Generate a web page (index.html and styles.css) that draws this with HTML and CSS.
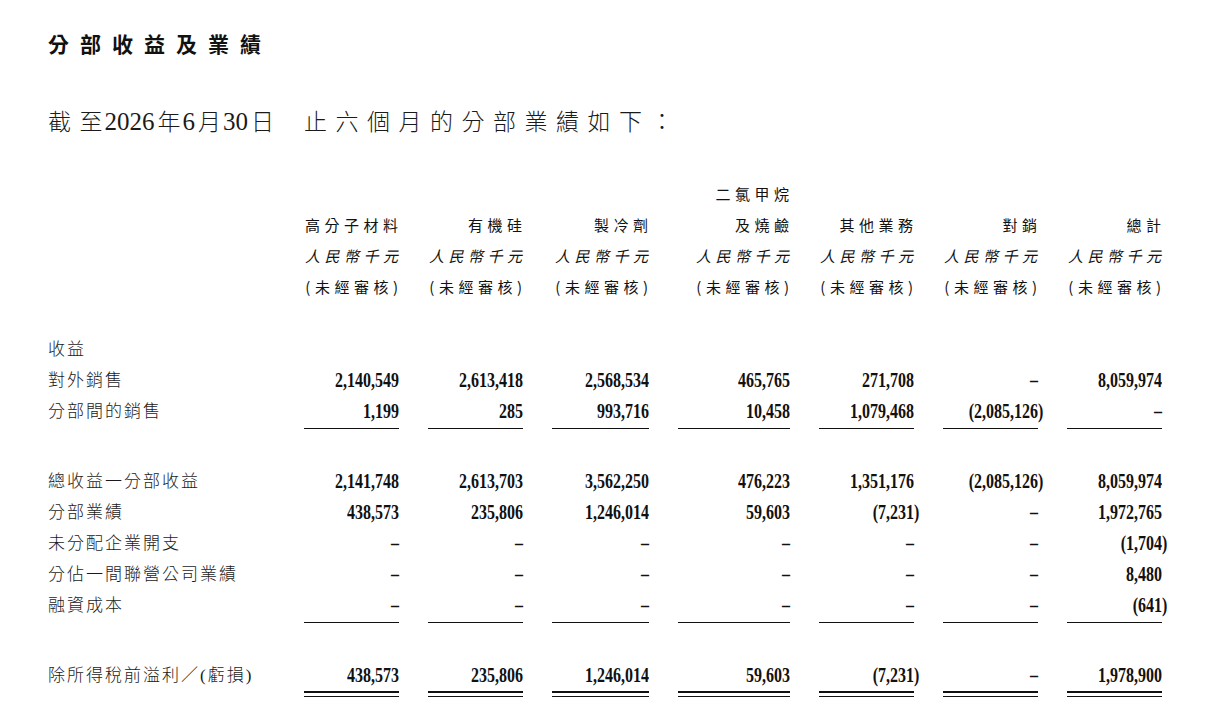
FILE: index.html
```html
<!DOCTYPE html>
<html lang="zh-Hant">
<head>
<meta charset="utf-8">
<title>分部收益及業績</title>
<link rel="stylesheet" href="styles.css">
</head>
<body>
<div class="page">
  <h1 class="title">分部收益及業績</h1>
  <p class="lead"><span class="sp">截</span>至<span class="d">2026</span>年<span class="d">6</span>月<span class="d">30</span>日<span class="gap"></span><span class="sp">止六個月的分部業績如下</span>：</p>

  <div class="head">
    <div class="row">
      <div></div><div></div><div></div><div></div>
      <div class="hc"><span class="ht">二氯甲烷</span></div>
      <div></div><div></div><div></div>
    </div>
    <div class="row">
      <div></div>
      <div class="hc"><span class="ht">高分子材料</span></div>
      <div class="hc"><span class="ht">有機硅</span></div>
      <div class="hc"><span class="ht">製冷劑</span></div>
      <div class="hc"><span class="ht">及燒鹼</span></div>
      <div class="hc"><span class="ht">其他業務</span></div>
      <div class="hc"><span class="ht">對銷</span></div>
      <div class="hc"><span class="ht">總計</span></div>
    </div>
    <div class="row it">
      <div></div>
      <div class="hc"><span class="ht">人民幣千元</span></div>
      <div class="hc"><span class="ht">人民幣千元</span></div>
      <div class="hc"><span class="ht">人民幣千元</span></div>
      <div class="hc"><span class="ht">人民幣千元</span></div>
      <div class="hc"><span class="ht">人民幣千元</span></div>
      <div class="hc"><span class="ht">人民幣千元</span></div>
      <div class="hc"><span class="ht">人民幣千元</span></div>
    </div>
    <div class="row">
      <div></div>
      <div class="hc"><span class="ht">(未經審核)</span></div>
      <div class="hc"><span class="ht">(未經審核)</span></div>
      <div class="hc"><span class="ht">(未經審核)</span></div>
      <div class="hc"><span class="ht">(未經審核)</span></div>
      <div class="hc"><span class="ht">(未經審核)</span></div>
      <div class="hc"><span class="ht">(未經審核)</span></div>
      <div class="hc"><span class="ht">(未經審核)</span></div>
    </div>
  </div>

  <div class="block first">
    <div class="row">
      <div class="lbl">收益</div>
      <div></div><div></div><div></div><div></div><div></div><div></div><div></div>
    </div>
    <div class="row">
      <div class="lbl">對外銷售</div>
      <div class="v"><span class="n">2,140,549</span></div>
      <div class="v"><span class="n">2,613,418</span></div>
      <div class="v"><span class="n">2,568,534</span></div>
      <div class="v"><span class="n">465,765</span></div>
      <div class="v"><span class="n">271,708</span></div>
      <div class="v"><span class="n">–</span></div>
      <div class="v"><span class="n">8,059,974</span></div>
    </div>
    <div class="row ul">
      <div class="lbl">分部間的銷售</div>
      <div class="v"><span class="n">1,199</span></div>
      <div class="v"><span class="n">285</span></div>
      <div class="v"><span class="n">993,716</span></div>
      <div class="v"><span class="n">10,458</span></div>
      <div class="v"><span class="n">1,079,468</span></div>
      <div class="v"><span class="n neg">(2,085,126)</span></div>
      <div class="v"><span class="n">–</span></div>
    </div>
  </div>

  <div class="block">
    <div class="row">
      <div class="lbl">總收益一分部收益</div>
      <div class="v"><span class="n">2,141,748</span></div>
      <div class="v"><span class="n">2,613,703</span></div>
      <div class="v"><span class="n">3,562,250</span></div>
      <div class="v"><span class="n">476,223</span></div>
      <div class="v"><span class="n">1,351,176</span></div>
      <div class="v"><span class="n neg">(2,085,126)</span></div>
      <div class="v"><span class="n">8,059,974</span></div>
    </div>
    <div class="row">
      <div class="lbl">分部業績</div>
      <div class="v"><span class="n">438,573</span></div>
      <div class="v"><span class="n">235,806</span></div>
      <div class="v"><span class="n">1,246,014</span></div>
      <div class="v"><span class="n">59,603</span></div>
      <div class="v"><span class="n neg">(7,231)</span></div>
      <div class="v"><span class="n">–</span></div>
      <div class="v"><span class="n">1,972,765</span></div>
    </div>
    <div class="row">
      <div class="lbl">未分配企業開支</div>
      <div class="v"><span class="n">–</span></div>
      <div class="v"><span class="n">–</span></div>
      <div class="v"><span class="n">–</span></div>
      <div class="v"><span class="n">–</span></div>
      <div class="v"><span class="n">–</span></div>
      <div class="v"><span class="n">–</span></div>
      <div class="v"><span class="n neg">(1,704)</span></div>
    </div>
    <div class="row">
      <div class="lbl">分佔一間聯營公司業績</div>
      <div class="v"><span class="n">–</span></div>
      <div class="v"><span class="n">–</span></div>
      <div class="v"><span class="n">–</span></div>
      <div class="v"><span class="n">–</span></div>
      <div class="v"><span class="n">–</span></div>
      <div class="v"><span class="n">–</span></div>
      <div class="v"><span class="n">8,480</span></div>
    </div>
    <div class="row ul">
      <div class="lbl">融資成本</div>
      <div class="v"><span class="n">–</span></div>
      <div class="v"><span class="n">–</span></div>
      <div class="v"><span class="n">–</span></div>
      <div class="v"><span class="n">–</span></div>
      <div class="v"><span class="n">–</span></div>
      <div class="v"><span class="n">–</span></div>
      <div class="v"><span class="n neg">(641)</span></div>
    </div>
  </div>

  <div class="block">
    <div class="row dbl">
      <div class="lbl">除所得稅前溢利／(虧損)</div>
      <div class="v"><span class="n">438,573</span></div>
      <div class="v"><span class="n">235,806</span></div>
      <div class="v"><span class="n">1,246,014</span></div>
      <div class="v"><span class="n">59,603</span></div>
      <div class="v"><span class="n neg">(7,231)</span></div>
      <div class="v"><span class="n">–</span></div>
      <div class="v"><span class="n">1,978,900</span></div>
    </div>
  </div>
</div>
</body>
</html>
```

FILE: styles.css
```css
html, body {
  margin: 0;
  padding: 0;
  background: #ffffff;
}

body {
  color: #161616;
  font-family: "Liberation Serif", "Noto Sans CJK TC", serif;
}

.page {
  padding: 28px 0 20px 48px;
  width: 1180px;
  box-sizing: border-box;
}

.title {
  margin: 0;
  font-family: "Noto Sans CJK TC", sans-serif;
  font-size: 21px;
  font-weight: 700;
  line-height: 30px;
  letter-spacing: 11px;
  color: #111;
}

.lead {
  margin: 47px 0 0 0;
  font-family: "Liberation Serif", "Noto Sans CJK TC", serif;
  font-size: 23px;
  font-weight: 300;
  line-height: 34px;
  letter-spacing: 0;
  color: #1a1a1a;
  white-space: nowrap;
}

.lead .sp {
  letter-spacing: 8.5px;
}

.lead .d {
  font-family: "Liberation Serif", serif;
  font-size: 25px;
  margin: 0 3px 0 2px;
}

.lead .gap {
  display: inline-block;
  width: 30px;
}

.row {
  display: grid;
  grid-template-columns: 227px 95px 95px 97px 112px 95px 95px 95px;
  column-gap: 29px;
  height: 31px;
  line-height: 31px;
}

.head {
  margin-top: 38px;
}

.hc {
  display: flex;
  justify-content: flex-end;
  white-space: nowrap;
  font-family: "Noto Sans CJK TC", sans-serif;
  font-size: 15px;
  letter-spacing: 4.5px;
  color: #111;
}

.ht {
  display: block;
  margin-right: -3.5px;
}

.it .hc {
  font-style: italic;
}

.block {
  margin-top: 37px;
}

.block.first {
  margin-top: 32px;
}

.lbl {
  font-family: "Liberation Serif", "Noto Sans CJK TC", serif;
  font-size: 17px;
  font-weight: 300;
  letter-spacing: 2px;
  white-space: nowrap;
  color: #1a1a1a;
}

.v {
  text-align: right;
  white-space: nowrap;
  font-family: "Liberation Serif", serif;
  font-size: 20px;
  font-weight: 700;
  color: #111;
}

.n {
  display: inline-block;
  transform: scaleX(0.8);
  transform-origin: 100% 50%;
}

.n.neg {
  margin-right: -5.3px;
}

.row.ul {
  height: 33px;
}

.row.ul .v {
  height: 32px;
  border-bottom: 1px solid #111;
}

.row.dbl {
  height: auto;
}

.row.dbl .v {
  border-bottom: 1px solid #111;
}

.row.dbl .v::after {
  content: "";
  display: block;
  height: 2px;
  margin-bottom: 3px;
  background: #111;
}
```
